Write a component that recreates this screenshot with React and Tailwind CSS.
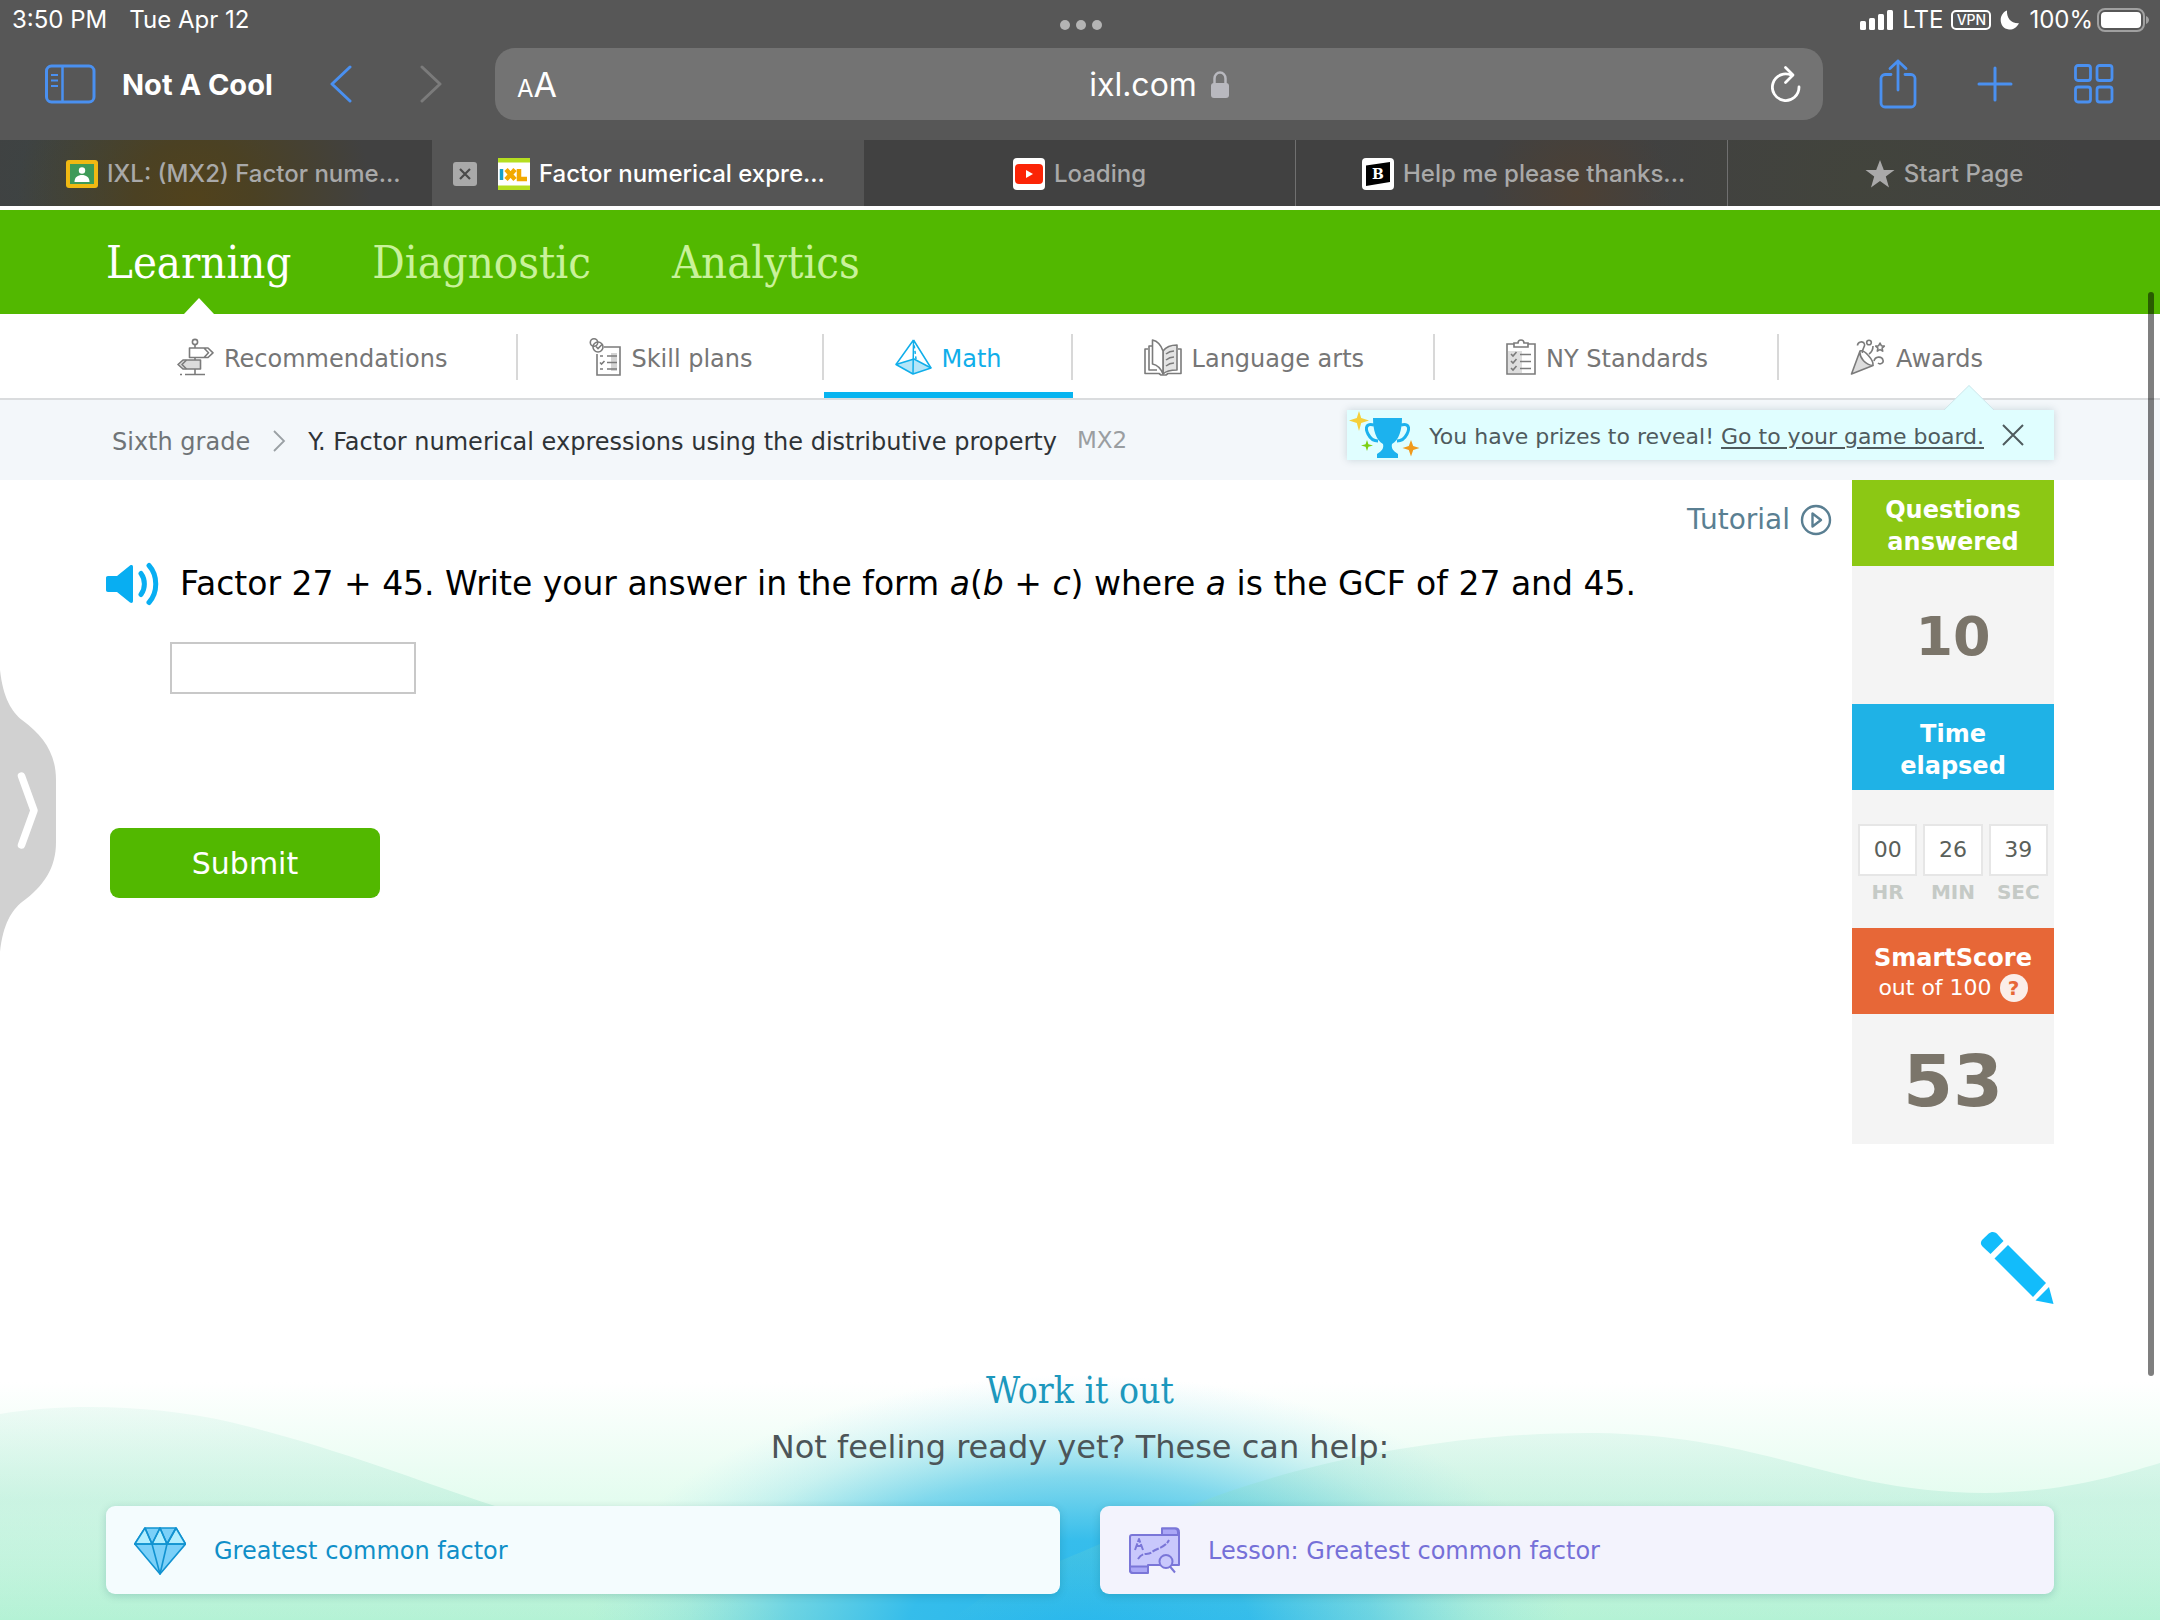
import React, { useState } from "react";

const tabs = [
  { title: "IXL: (MX2) Factor nume...", icon: "classroom" },
  { title: "Factor numerical expre...", icon: "ixl", active: true },
  { title: "Loading", icon: "youtube", centered: true },
  { title: "Help me please thanks...", icon: "brainly" },
  { title: "Start Page", icon: "star", centered: true },
];

const subjects = [
  { name: "Recommendations", icon: "sign" },
  { name: "Skill plans", icon: "plans" },
  { name: "Math", icon: "pyramid", active: true },
  { name: "Language arts", icon: "book" },
  { name: "NY Standards", icon: "clipboard" },
  { name: "Awards", icon: "party" },
];

function StatusBar() {
  return (
    <div className="grid h-12 grid-cols-[1fr_auto_1fr] pr-[11px] pl-3 text-[24px] leading-10">
      <div className="flex gap-[22px]">
        <span>3:50 PM</span>
        <span>Tue Apr 12</span>
      </div>
      <div className="flex gap-1.5 pt-5">
        <span className="size-2.5 rounded-full bg-[#b4b4b4]" />
        <span className="size-2.5 rounded-full bg-[#b4b4b4]" />
        <span className="size-2.5 rounded-full bg-[#b4b4b4]" />
      </div>
      <div className="flex h-10 items-center justify-end gap-2">
        <svg width="34" height="20" viewBox="0 0 34 20" fill="#fff">
          <rect x="0" y="11" width="6" height="9" rx="1.5" />
          <rect x="9" y="8" width="6" height="12" rx="1.5" />
          <rect x="18" y="4" width="6" height="16" rx="1.5" />
          <rect x="27" y="0" width="6" height="20" rx="1.5" />
        </svg>
        <span>LTE</span>
        <span className="flex h-5 w-10 items-center justify-center rounded-[5px] border-2 border-white text-[14px] leading-none font-medium">
          VPN
        </span>
        <svg width="22" height="22" viewBox="0 0 22 22" fill="#fff">
          <path d="M8 1.5C7.5 8.5 11.5 14.5 20 14.2 17.5 19 13.5 20.8 10 20.4 4.500 20 1.500 15.500 1.700 10.500 1.900 6.300 4.500 2.800 8 1.500Z" />
        </svg>
        <span>100%</span>
        <svg className="-ml-1" width="52" height="24" viewBox="0 0 52 24">
          <rect x="1" y="1" width="46" height="22" rx="7" fill="none" stroke="#a0a0a0" strokeWidth="2" />
          <rect x="4" y="4" width="40" height="16" rx="4" fill="#fff" />
          <path d="M49 8v8c2-1 3-2.500 3-4s-1-3-3-4Z" fill="#a0a0a0" />
        </svg>
      </div>
    </div>
  );
}

function Toolbar() {
  return (
    <div className="flex h-[72px] items-center pr-[46px] pl-[45px]">
      <button aria-label="Sidebar">
        <svg width="51" height="40" viewBox="0 0 51 40" fill="none" stroke="#4a90f0" strokeWidth="3">
          <rect x="1.500" y="2" width="47.500" height="36" rx="5" />
          <path d="M17.500 2v36" strokeWidth="2.500" />
          <path d="M6 11h7M6 16.500h7M6 22h7" strokeWidth="2" />
        </svg>
      </button>
      <span className="ml-[26px] w-[208px] pt-0.5 text-[29px] font-bold whitespace-nowrap">Not A Cool</span>
      <button aria-label="Back">
        <svg width="22" height="38" viewBox="0 0 22 38" fill="none" stroke="#4a90f0" strokeWidth="3" strokeLinecap="round" strokeLinejoin="round">
          <path d="M20 2 2 19l18 17" />
        </svg>
      </button>
      <button aria-label="Forward" className="ml-[68px]">
        <svg width="22" height="38" viewBox="0 0 22 38" fill="none" stroke="#7b7b7b" strokeWidth="3" strokeLinecap="round" strokeLinejoin="round">
          <path d="M2 2l18 17L2 36" />
        </svg>
      </button>
      <div className="ml-[53px] grid h-[72px] flex-1 grid-cols-[1fr_auto_1fr] items-center rounded-[20px] bg-[#737373] px-[22px]">
        <div className="flex items-baseline pt-0.5 leading-none">
          <span className="text-[24px]">A</span>
          <span className="text-[34px]">A</span>
        </div>
        <div className="flex items-center gap-3.5 pt-0.5 text-[32px]">
          ixl.com
          <svg width="18" height="28" viewBox="0 0 18 28">
            <path d="M3.500 13V7.500a5.500 6 0 0 1 11 0V13" fill="none" stroke="#b9b9bf" strokeWidth="2.500" />
            <rect x="0" y="12" width="18" height="15" rx="3" fill="#b9b9bf" />
          </svg>
        </div>
        <button aria-label="Reload" className="justify-self-end">
          <svg width="30" height="38" viewBox="0 0 30 38" fill="none" stroke="#fff" strokeWidth="2.800" strokeLinecap="round" strokeLinejoin="round">
            <path d="M28 22A13.300 13.300 0 1 1 21 10.500" />
            <path d="M14.500 2.500 22 10l-7.500 7.500" />
          </svg>
        </button>
      </div>
      <button aria-label="Share" className="ml-14">
        <svg width="38" height="50" viewBox="0 0 38 50" fill="none" stroke="#4a90f0" strokeWidth="2.800" strokeLinecap="round" strokeLinejoin="round">
          <path d="M12 15.500H6a4 4 0 0 0-4 4V44a4 4 0 0 0 4 4h26a4 4 0 0 0 4-4V19.500a4 4 0 0 0-4-4h-6" />
          <path d="M19 31V2M11 9.500 19 2l8 7.500" />
        </svg>
      </button>
      <button aria-label="New tab" className="ml-[60px]">
        <svg width="36" height="36" viewBox="0 0 36 36" stroke="#4a90f0" strokeWidth="3" strokeLinecap="round">
          <path d="M18 2v32M2 18h32" />
        </svg>
      </button>
      <button aria-label="Tab overview" className="ml-[61px]">
        <svg width="40" height="40" viewBox="0 0 40 40" fill="none" stroke="#4a90f0" strokeWidth="2.800">
          <rect x="1.500" y="1.500" width="15" height="15" rx="2.500" />
          <rect x="23" y="1.500" width="15" height="15" rx="2.500" />
          <rect x="1.500" y="23" width="15" height="15" rx="2.500" />
          <rect x="23" y="23" width="15" height="15" rx="2.500" />
        </svg>
      </button>
    </div>
  );
}

function TabIcon({ name }) {
  if (name === "classroom") {
    return (
      <svg className="shrink-0" width="32" height="28" viewBox="0 0 32 28">
        <rect width="32" height="28" rx="3" fill="#f0b913" />
        <rect x="4" y="4" width="24" height="20" fill="#3f9a58" />
        <circle cx="16" cy="10.500" r="3.200" fill="#fff" />
        <path d="M8.500 22c0-5 3.500-7 7.500-7s7.500 2 7.500 7Z" fill="#fff" />
      </svg>
    );
  }
  if (name === "ixl") {
    return (
      <svg className="shrink-0" width="32" height="32" viewBox="0 0 32 32">
        <rect width="32" height="32" fill="#fff" />
        <path d="M0 0h32v4.500H0zM0 27.500h32V32H0z" fill="#b5de20" />
        <path d="M3.500 11v11" stroke="#16a0c8" strokeWidth="3.500" />
        <path d="M8 11.500 17 21.500M17 11.500 8 21.500M21 11v10h8" stroke="#f2a900" strokeWidth="4.500" fill="none" />
      </svg>
    );
  }
  if (name === "youtube") {
    return (
      <svg className="shrink-0" width="32" height="32" viewBox="0 0 32 32">
        <rect width="32" height="32" rx="4" fill="#fff" />
        <rect x="2" y="6" width="28" height="20" rx="4" fill="#fb2406" />
        <path d="M13 12v8l7-4z" fill="#fff" />
      </svg>
    );
  }
  if (name === "brainly") {
    return (
      <svg className="shrink-0" width="32" height="32" viewBox="0 0 32 32">
        <rect width="32" height="32" rx="4" fill="#fff" />
        <path d="M4 7.500 28 4v20L4 28z" fill="#000" />
        <text x="16" y="21" textAnchor="middle" fontFamily="DejaVu Serif, serif" fontWeight="700" fontSize="14" fill="#fff">B</text>
      </svg>
    );
  }
  return (
    <svg className="shrink-0" width="30" height="28" viewBox="0 0 30 28" fill="#a9a9a9">
      <path d="M15 0l3.800 10H29.500l-8.700 6.600L24 27.500l-9-6.500-9 6.500 3.200-10.900L.5 10h10.700z" />
    </svg>
  );
}

function TabBar() {
  return (
    <div className="grid h-[66px] grid-cols-5 bg-[#414141] bg-[radial-gradient(circle_at_9%_90%,#51421c_0,#4b4123_3%,transparent_9%),radial-gradient(circle_at_5%_60%,#3b4545_0,transparent_8%),radial-gradient(circle_at_73%_80%,#4c4034_0,transparent_6%),radial-gradient(circle_at_86%_60%,#42443c_0,transparent_12%)] text-[24px] font-medium">
      {tabs.map((tab) => (
        <div
          key={tab.title}
          className={
            "flex items-center gap-[9px] overflow-hidden pt-0.5 whitespace-nowrap " +
            (tab.active ? "bg-[#555555] pl-[21px] text-white" : "text-[#a9a9a9]") +
            (tab.centered ? " justify-center" : tab.active ? "" : " pl-[66px]") +
            (tab.icon === "youtube" || tab.icon === "brainly" ? " border-r border-[#707070]" : "")
          }
        >
          {tab.active && (
            <button aria-label="Close tab" className="mr-3 flex size-6 items-center justify-center rounded-[3px] bg-[#a9a9a9]">
              <svg width="12" height="12" viewBox="0 0 12 12" stroke="#4a4a4a" strokeWidth="2.200">
                <path d="M1 1l10 10M11 1 1 11" />
              </svg>
            </button>
          )}
          <TabIcon name={tab.icon} />
          <span>{tab.title}</span>
        </div>
      ))}
    </div>
  );
}

function SubjectIcon({ name }) {
  if (name === "sign") {
    return (
      <svg width="37" height="38" viewBox="0 0 37 38" fill="none" stroke="#7b7b7b" strokeWidth="1.600" strokeLinejoin="round">
        <circle cx="18" cy="4" r="2.600" />
        <path d="M18 7v3M18 19v3M18 31v5M8 36.500h20M3 36.500h2" />
        <path d="M12.500 10H31l5 4.800-5 4.700H12.500zM27 10l4.500 4.800-4.500 4.700" />
        <path d="M23.500 22H6L1 26.500 6 31h17.500z" fill="#dcdcdc" />
        <path d="M9.500 22 5 26.500 9.500 31" />
      </svg>
    );
  }
  if (name === "plans") {
    return (
      <svg width="32" height="38" viewBox="0 0 32 38" fill="none" stroke="#7b7b7b" strokeWidth="1.600">
        <path d="M22 15h6v18h-6z" fill="#d4d4d4" stroke="none" />
        <path d="M15 9h16v28H8V16" />
        <circle cx="5" cy="4.500" r="3.700" />
        <circle cx="9" cy="9" r="5" />
        <path d="M7 8.500 9 10.500l4-4" />
        <path d="M18 18h10M18 24.500h10M18 31h10M11 18h3M11 31h3M11 24.500l1.500 1.500 3-3" />
      </svg>
    );
  }
  if (name === "pyramid") {
    return (
      <svg width="37" height="36" viewBox="0 0 37 36" fill="none" stroke="#10aeea" strokeWidth="1.500" strokeLinejoin="round">
        <path d="M1 25.500 19 20l17 9-18 6z" fill="#b4e5f8" />
        <path d="M18.500 1 1 25.500M18.500 1 36 29M18.500 1 18 35" />
        <path d="M18.500 1 21 20" strokeDasharray="3 2.500" />
      </svg>
    );
  }
  if (name === "book") {
    return (
      <svg width="38" height="37" viewBox="0 0 38 37" fill="none" stroke="#7b7b7b" strokeWidth="1.600" strokeLinejoin="round">
        <path d="M19 12c3-4 8-6 14-6v25c-6 0-11 1-14 4z" fill="#e4e4e4" />
        <path d="M19 12C17 6 13 2 8.500 1v24c5 1 8.500 5 10.500 10z" fill="#fff" />
        <path d="M8.500 7H5v24h8M4 10H1v24.500h14l2 1.500h5l2-1.500h13V10h-3" />
        <path d="M22 15c3-2.500 5-3 8-3M22 21c3-2.500 5-3 8-3M22 27c3-2.500 5-3 8-3" />
      </svg>
    );
  }
  if (name === "clipboard") {
    return (
      <svg width="30" height="36" viewBox="0 0 30 36" fill="none" stroke="#7b7b7b" strokeWidth="1.600">
        <path d="M2 12h14v22H2z" fill="#dedede" stroke="none" />
        <path d="M8 5H1v30h28V5h-7" />
        <path d="M8 8V4h4a3 3 0 0 1 6 0h4v4z" fill="#fff" />
        <path d="M5 15l2 2 3.500-4M5 22l2 2 3.500-4M5 29l2 2 3.500-4M14 15.500h11M14 22.500h11M14 29.500h11" />
      </svg>
    );
  }
  return (
    <svg width="36" height="36" viewBox="0 0 36 36" fill="none" stroke="#7b7b7b" strokeWidth="1.600" strokeLinejoin="round">
      <path d="M10 12c-1 7 6 14 13 14.500L1.500 35z" fill="#dcdcdc" />
      <path d="M10 12c4-2 14 9 13 14.500" />
      <path d="M7.500 6.500c0-4 6-5 7-1.500 1 3-3 5-2 9" />
      <circle cx="19" cy="3.500" r="2.300" />
      <path d="M23 7c0 3-1 6-4 8M24 22c1-5 8-5 9-1 1 3-3 5-5 3" />
      <path d="M30 4l1.300 2.700 3 .4-2.200 2 .6 3-2.700-1.500-2.700 1.500.6-3-2.200-2 3-.4z" />
    </svg>
  );
}

function Header() {
  return (
    <header className="border-t-4 border-white">
      <nav className="flex h-[104px] gap-[81px] bg-[#52b800] px-[106px] font-['DejaVu_Serif_Condensed','DejaVu_Serif',serif] text-[45px] leading-[106px] text-[#c9f29a]">
        <a href="#learning" className="relative text-white">
          Learning
          <svg className="absolute bottom-0 left-1/2 -translate-x-1/2" width="30" height="16" viewBox="0 0 30 16">
            <path d="M0 16 15 0l15 16z" fill="#fff" />
          </svg>
        </a>
        <a href="#diagnostic">Diagnostic</a>
        <a href="#analytics">Analytics</a>
      </nav>
      <nav className="flex h-[86px] border-b-2 border-[#dadcde] bg-white px-[106px] text-[24px] text-[#767676]">
        {subjects.map((subject, i) => (
          <a
            key={subject.name}
            href="#subject"
            className={
              "relative flex grow items-center justify-center gap-2.5 border-b-6 pt-2 whitespace-nowrap " +
              (subject.active ? "border-[#08b4f0] text-[#10aeea]" : "border-transparent")
            }
          >
            <SubjectIcon name={subject.icon} />
            <span className="pt-1">{subject.name}</span>
            {i < subjects.length - 1 && (
              <span className="absolute top-5 right-0 h-[46px] w-0.5 bg-[#d8d8d8]" />
            )}
          </a>
        ))}
      </nav>
    </header>
  );
}

function PrizeBanner({ onClose }) {
  return (
    <div className="relative mt-2.5 flex h-[50px] items-center bg-[#e0feff] pr-[30px] text-[22px] text-[#4f5b5e] shadow-[0_0_8px_rgba(0,60,80,0.18)]">
      <svg className="absolute -top-[25px] right-[60px]" width="50" height="26" viewBox="0 0 50 26">
        <path d="M0 25.500 25 0l25 25.500z" fill="#e0feff" />
        <path d="M0 25 25 .5 50 25" fill="none" stroke="#cfe6ea" />
      </svg>
      <svg className="mr-2" width="74" height="50" viewBox="0 0 74 50">
        <path d="M12 1l2.200 7L22 10.500 14.200 13 12 21 9.800 13 2 10.500 9.800 8z" fill="#f5cf3a" />
        <path d="M26 8h29c0 12-3 22-10 26-1 4 1 7 6 10v4H30v-4c5-3 7-6 6-10-7-4-10-14-10-26Z" fill="#1cb2ee" />
        <path d="M27 15c-8-2-9 3-6 9 2 4 6 7 10 7M54 15c8-2 9 3 6 9-2 4-6 7-10 7" fill="none" stroke="#1cb2ee" strokeWidth="3" />
        <path d="M20 30l1.400 4.200L26 35.500l-4.600 1.300L20 41l-1.400-4.200L14 35.500l4.600-1.300z" fill="#7ccf12" />
        <path d="M64 30l2.200 6 6.300 2-6.300 2-2.200 6.500-2.200-6.500-6.300-2 6.300-2z" fill="#f09a1c" />
      </svg>
      <p className="pt-0.5">
        You have prizes to reveal!{" "}
        <a href="#board" className="underline underline-offset-3">Go to your game board.</a>
      </p>
      <button aria-label="Dismiss" className="ml-[18px]" onClick={onClose}>
        <svg width="22" height="22" viewBox="0 0 22 22" stroke="#4f5b5e" strokeWidth="2">
          <path d="M1 1l20 20M21 1 1 21" />
        </svg>
      </button>
    </div>
  );
}

function ScorePanel() {
  const time = [
    { value: "00", label: "HR" },
    { value: "26", label: "MIN" },
    { value: "39", label: "SEC" },
  ];

  return (
    <aside className="w-[202px] shrink-0 bg-[#f4f4f4] text-center text-[24px] leading-8 font-bold text-white">
      <h2 className="bg-[#8cc814] px-6 pt-3.5 pb-2">Questions answered</h2>
      <div className="pt-1 text-[54px] leading-[134px] text-[#7b756a]">10</div>
      <h2 className="bg-[#1fb2e6] px-10 pt-3.5 pb-2">Time elapsed</h2>
      <div className="grid h-[138px] grid-cols-3 gap-1.5 px-1.5 pt-[34px] text-[20px] text-[#c5cac6]">
        {time.map((t) => (
          <div key={t.label}>
            <div className="h-[52px] border-2 border-[#e6e6e6] bg-white text-[22px] leading-[48px] font-normal text-[#5a605a]">
              {t.value}
            </div>
            {t.label}
          </div>
        ))}
      </div>
      <h2 className="bg-[#e76737] pt-3.5 pb-2">
        SmartScore
        <span className="flex h-8 items-center justify-center gap-2 pb-1 text-[22px] font-normal">
          out of 100
          <span className="flex size-7 items-center justify-center rounded-full bg-[#fbeee9] text-[20px] font-bold text-[#e76737]">?</span>
        </span>
      </h2>
      <div className="pt-1 text-[72px] leading-[126px] text-[#7b756a]">53</div>
    </aside>
  );
}

function Question() {
  const [answer, setAnswer] = useState("");

  return (
    <main className="relative flex min-h-[860px] items-start bg-white px-[106px]">
      <form className="flex-1" onSubmit={(e) => e.preventDefault()}>
        <div className="flex justify-end pt-5 pr-5">
          <a href="#tutorial" className="flex items-center gap-2.5 text-[28px] leading-10 text-[#5a7f92]">
            Tutorial
            <svg width="32" height="32" viewBox="0 0 32 32" fill="none" stroke="#5a7f92" strokeWidth="2.400" strokeLinejoin="round">
              <circle cx="16" cy="16" r="14" />
              <path d="M12.500 9.500v13l8.500-6.500z" />
            </svg>
          </a>
        </div>
        <div className="mt-[22px] flex items-center gap-5">
          <button type="button" aria-label="Read aloud">
            <svg width="54" height="44" viewBox="0 0 54 44" fill="#08aef2">
              <path d="M2 14h9L24 3.500c1.500-1 3-.5 3 1.500v34c0 2-1.500 2.500-3 1.500L11 30H2c-1.300 0-2-.7-2-2V16c0-1.300.7-2 2-2Z" />
              <path d="M35 11.500c4.500 6 4.500 15 0 21M43 3.500c9 10 9 27 0 37" fill="none" stroke="#08aef2" strokeWidth="5" strokeLinecap="round" />
            </svg>
          </button>
          <label htmlFor="answer" className="text-[33px] leading-11 whitespace-nowrap text-black">
            Factor 27 + 45. Write your answer in the form <i>a</i>(<i>b</i> + <i>c</i>) where <i>a</i> is the GCF of 27 and 45.
          </label>
        </div>
        <input
          id="answer"
          type="text"
          value={answer}
          onChange={(e) => setAnswer(e.target.value)}
          className="mt-9 ml-16 block h-[52px] w-[246px] border-2 border-[#c8c8c8] px-2 text-[28px]"
        />
        <button type="submit" className="mt-[134px] ml-1 h-[70px] w-[270px] rounded-[9px] bg-[#52b800] text-[30px] text-white">
          Submit
        </button>
      </form>
      <ScorePanel />
      <button aria-label="Open drawer" className="absolute top-[190px] left-0">
        <svg width="57" height="284" viewBox="0 0 57 284">
          <path d="M0 0C3 28 12 42 22 50 44 66 56 84 56 110v62c0 26-12 44-34 60C12 240 3 254 0 282Z" fill="#d1d1d1" />
          <path d="M21.500 106 34 140.500 21.500 175" fill="none" stroke="#fff" strokeWidth="7.500" strokeLinecap="round" strokeLinejoin="round" />
        </svg>
      </button>
      <button aria-label="Scratchpad" className="absolute top-[752px] right-[106px]">
        <svg width="74" height="73" viewBox="0 0 74 73" fill="#12bcfb">
          <path d="M2 8 8.500 1.800c3-2.500 6-2.300 8.500 0L23.500 9 10.500 22 3 15c-2.500-2.500-2.700-4.500-1-7Z" />
          <path d="M28 13 66 51 53 65 14.500 26.500z" />
          <path d="M69 55l4.500 17-18-3.500z" />
        </svg>
      </button>
    </main>
  );
}

function WorkItOut() {
  return (
    <section className="relative flex-1 overflow-hidden bg-[linear-gradient(#ffffff_15%,#e2fcee_60%,#b4f2d5_100%)] px-[106px] pt-7 pb-[26px] text-center">
      <svg className="absolute inset-0 size-full" viewBox="0 0 2160 280" preserveAspectRatio="none">
        <defs>
          <radialGradient id="glow" cx="1080" cy="290" r="490" gradientUnits="userSpaceOnUse" gradientTransform="translate(0 139) scale(1 .52)">
            <stop offset="0" stopColor="#2ab8ec" />
            <stop offset=".35" stopColor="#2ebaec" stopOpacity=".95" />
            <stop offset=".6" stopColor="#3cc0ea" stopOpacity=".6" />
            <stop offset=".8" stopColor="#56caea" stopOpacity=".22" />
            <stop offset="1" stopColor="#8edcf4" stopOpacity="0" />
          </radialGradient>
          <linearGradient id="hill" x1="0" y1="65" x2="0" y2="280" gradientUnits="userSpaceOnUse">
            <stop offset="0" stopColor="#86dcc0" stopOpacity=".1" />
            <stop offset=".45" stopColor="#86dcc0" stopOpacity=".27" />
            <stop offset="1" stopColor="#86dcc0" stopOpacity="0" />
          </linearGradient>
        </defs>
        <rect width="2160" height="280" fill="url(#glow)" />
        <path d="M0 74C70 62 160 66 230 82 330 106 410 138 495 166 600 206 700 250 800 280H0Z" fill="url(#hill)" />
        <path d="M1000 245C1090 210 1130 190 1190 166 1300 122 1450 92 1596 93 1770 96 1830 152 1985 153 2060 152 2110 138 2160 123V280H950Z" fill="url(#hill)" />
      </svg>
      <div className="relative">
        <h2 className="font-['DejaVu_Serif_Condensed','DejaVu_Serif',serif] text-[37px] leading-[46px] text-[#1d98bd]">Work it out</h2>
        <p className="pt-2.5 text-[32px] leading-[46px] text-[#4c5558]">Not feeling ready yet? These can help:</p>
        <div className="mt-9 grid grid-cols-2 gap-10 text-[24px]">
          <a href="#skill" className="flex h-[88px] items-center gap-7 rounded-[9px] bg-[#f4fcfe] pt-0.5 pl-7 text-[#0f8fc8] shadow-[0_2px_8px_rgba(0,80,90,0.2)]">
            <svg width="52" height="48" viewBox="0 0 52 48" fill="#7bd0f8" stroke="#1192d0" strokeWidth="1.600" strokeLinejoin="round">
              <path d="M11 1h31l9.500 16L26 47 .8 17z" />
              <path d="M11 1 .8 17H18zM42 1l9.500 16H33zM26 1l-8 16h15z" fill="#b2eefe" />
              <path d="M11 1l7 16L26 1l7 16 9-16M.8 17h50.700M18 17l8 30 7-30" fill="none" />
            </svg>
            Greatest common factor
          </a>
          <a href="#lesson" className="flex h-[88px] items-center gap-7 rounded-[9px] bg-[#f3f3fd] pt-0.5 pl-[29px] text-[#7570d8] shadow-[0_2px_8px_rgba(0,80,90,0.2)]">
            <svg width="51" height="48" viewBox="0 0 51 48" fill="#c9c8fc" stroke="#7a76d8" strokeWidth="2" strokeLinejoin="round">
              <path d="M33 8V1.500h14c2 0 3 2 3 4V38H19v5c0 2-1 3-3 3H4c-2 0-3-1-3-3V10c0-1.500 1-2 2-2z" />
              <path d="M33 1.500V8h16V5c0-2-1-3.500-3-3.500zM1 39.500h18V46H4c-2 0-3-1-3-3z" fill="#aaa7f6" />
              <path d="M6 23l4-11 4 11M7.500 19h5M9 32c5-8 9-3 14-7s13-4 17-12" fill="none" strokeDasharray="7 1.500" />
              <circle cx="37" cy="34.500" r="6.500" />
              <path d="M41 39.500l5 6" fill="none" />
            </svg>
            Lesson: Greatest common factor
          </a>
        </div>
      </div>
    </section>
  );
}

function App() {
  const [showBanner, setShowBanner] = useState(true);

  return (
    <div className="relative flex min-h-screen flex-col bg-white font-['DejaVu_Sans',sans-serif]">
      <div className="bg-[#575757] bg-[radial-gradient(ellipse_at_10%_100%,#5f573f_0,transparent_11%),radial-gradient(ellipse_at_88%_100%,#57594f_0,transparent_22%)] font-['Inter',sans-serif] text-white">
        <StatusBar />
        <Toolbar />
        <div className="pt-5">
          <TabBar />
        </div>
      </div>
      <Header />
      <div className="flex h-20 items-start bg-[#f3f7fa] pr-[106px] pl-28 text-[24px] leading-[84px]">
        <a href="#grade" className="text-[#6f7477]">Sixth grade</a>
        <svg className="mx-[22px] mt-[30px]" width="14" height="22" viewBox="0 0 14 22" fill="none" stroke="#9aa0a4" strokeWidth="1.800">
          <path d="M2 1l10 10L2 21" />
        </svg>
        <h1 className="text-[#2f3336]">Y. Factor numerical expressions using the distributive property</h1>
        <span className="ml-5 text-[23px] leading-[80px] text-[#9a9ea1]">MX2</span>
        <div className="ml-auto leading-normal whitespace-nowrap">
          {showBanner && <PrizeBanner onClose={() => setShowBanner(false)} />}
        </div>
      </div>
      <Question />
      <WorkItOut />
      <div className="absolute top-[292px] right-1.5 h-[1084px] w-1.5 rounded-full bg-black/50" />
    </div>
  );
}

export default App;
